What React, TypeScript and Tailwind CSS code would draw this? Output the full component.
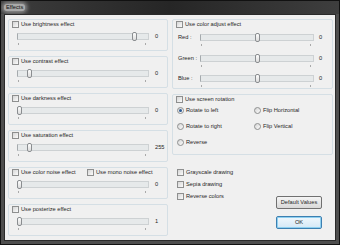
import React from "react";

const txt = "text-[5.7px] leading-[7px] text-[#262626] whitespace-nowrap";

function Box() {
  return (
    <div className="w-[7px] h-[7px] shrink-0 border border-[#8e8f8f] bg-gradient-to-br from-[#d6d6d6] to-[#fbfbfb]" />
  );
}

function Checkbox({ label }: { label: string }) {
  return (
    <div className="flex items-center gap-[2px] h-[7px]">
      <Box />
      <span className={txt}>{label}</span>
    </div>
  );
}

function Radio({ label, checked }: { label: string; checked?: boolean }) {
  return (
    <div className="flex items-center gap-[2px] h-[7px]">
      <div className="w-[7px] h-[7px] shrink-0 rounded-full border border-[#8e8f8f] bg-gradient-to-br from-[#d6d6d6] to-[#fbfbfb] flex items-center justify-center">
        {checked && <div className="w-[3px] h-[3px] rounded-full bg-[#2b5a94]" />}
      </div>
      <span className={txt}>{label}</span>
    </div>
  );
}

function Track({
  wide,
  thumb,
}: {
  wide: boolean;
  thumb: number;
}) {
  return (
    <div
      className={
        "relative h-[7px] shrink-0 border border-[#cdd1d3] border-l-[#a5aaad] bg-[#e6e9ea] " +
        (wide ? "w-[132px]" : "w-[114px]")
      }
    >
      <div
        className="absolute top-[-2px] w-[5px] h-[9px] rounded-[2px] border border-[#8a8d90] bg-gradient-to-b from-[#fdfdfd] to-[#dcdcdc]"
        style={{ left: thumb }}
      />
      <div className="absolute top-[9px] left-[0px] w-[1px] h-[2px] bg-[#a9a9a9]" />
      <div className="absolute top-[9px] right-[2px] w-[1px] h-[2px] bg-[#a9a9a9]" />
    </div>
  );
}

function LeftGroup({
  label,
  thumb,
  value,
  noise,
}: {
  label: string;
  thumb: number;
  value: string;
  noise?: boolean;
}) {
  return (
    <div className="h-[32px] shrink-0 rounded-[2px] border border-[#d5dfe5] pl-[3px] pt-[1px] flex flex-col">
      {noise ? (
        <div className="flex">
          <div className="w-[75px]">
            <Checkbox label="Use color noise effect" />
          </div>
          <Checkbox label="Use mono noise effect" />
        </div>
      ) : (
        <Checkbox label={label} />
      )}
      <div className="mt-[5px] pl-[5px] flex items-center">
        <Track wide thumb={thumb} />
        <span className={txt + " ml-[6px]"}>{value}</span>
      </div>
    </div>
  );
}

function ColorRow({ label, mt }: { label: string; mt: string }) {
  return (
    <div className={"flex items-center pl-[2px] " + mt}>
      <span className={txt + " w-[22px]"}>{label}</span>
      <Track wide={false} thumb={54} />
      <span className={txt + " ml-[5px]"}>0</span>
    </div>
  );
}

export default function App() {
  return (
    <div
      className="w-[340px] h-[245px] flex flex-col bg-[#4e4e4e] border border-[#111] font-['Liberation_Sans',Arial,sans-serif] overflow-hidden"
    >
      <div className="h-[13px] shrink-0 flex items-center pl-[3px] bg-gradient-to-r from-[#3d3d3d] via-[#262626] to-[#3e3e3e]">
        <span className="text-[5.7px] leading-[7px] px-[2px] text-[#111] bg-[#a9a9a9] rounded-[3px] shadow-[0_0_4px_2px_rgba(170,170,170,0.8)]">
          Effects
        </span>
      </div>
      <div className="flex-1 mx-[3px] mb-[3px] bg-[#f0f0f0] border border-[#2a2a2a] flex gap-[4px] pl-[3px] pt-[4px]">
        <div className="w-[160px] shrink-0 flex flex-col gap-[5px]">
          <LeftGroup label="Use brightness effect" thumb={114} value="0" />
          <LeftGroup label="Use contrast effect" thumb={9} value="0" />
          <LeftGroup label="Use darkness effect" thumb={-1} value="0" />
          <LeftGroup label="Use saturation effect" thumb={9} value="255" />
          <LeftGroup label="" noise thumb={-1} value="0" />
          <LeftGroup label="Use posterize effect" thumb={-1} value="1" />
        </div>
        <div className="w-[161px] shrink-0 flex flex-col">
          <div className="h-[70px] shrink-0 rounded-[2px] border border-[#d5dfe5] pl-[3px] pt-[1px] flex flex-col">
            <Checkbox label="Use color adjust effect" />
            <ColorRow label="Red :" mt="mt-[6px]" />
            <ColorRow label="Green :" mt="mt-[14px]" />
            <ColorRow label="Blue :" mt="mt-[13px]" />
          </div>
          <div className="mt-[5px] h-[61px] shrink-0 rounded-[2px] border border-[#d5dfe5] pl-[3px] pt-[1px] flex flex-col">
            <Checkbox label="Use screen rotation" />
            <div className="mt-[4px] grid grid-cols-[77px_1fr] gap-y-[9px] pl-[1px]">
              <Radio label="Rotate to left" checked />
              <Radio label="Flip Horizontal" />
              <Radio label="Rotate to right" />
              <Radio label="Flip Vertical" />
              <Radio label="Reverse" />
            </div>
          </div>
          <div className="flex justify-between pr-[11px]">
            <div className="pt-[14px] pl-[5px] flex flex-col gap-[5px]">
              <Checkbox label="Grayscale drawing" />
              <Checkbox label="Sepia drawing" />
              <Checkbox label="Reverse colors" />
            </div>
            <div className="pt-[41px] flex flex-col gap-[7px]">
              <div className="w-[46px] h-[13px] rounded-[2px] border border-[#707070] bg-gradient-to-b from-[#f4f4f4] to-[#d9d9d9] flex items-center justify-center">
                <span className={txt}>Default Values</span>
              </div>
              <div className="w-[46px] h-[13px] rounded-[2px] border border-[#3c7fb1] bg-gradient-to-b from-[#f0f7fc] to-[#d4e8f6] flex items-center justify-center shadow-[inset_0_0_0_1px_#8fd0f0]">
                <span className={txt}>OK</span>
              </div>
            </div>
          </div>
        </div>
      </div>
    </div>
  );
}
